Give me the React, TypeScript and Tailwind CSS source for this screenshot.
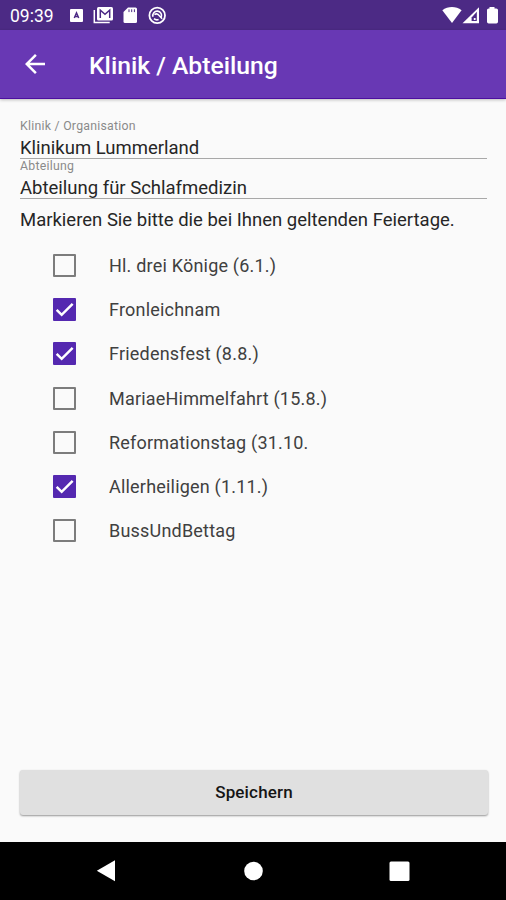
import clsx from "clsx";
import React, { useState } from "react";

const holidays = [
  { name: "Hl. drei Könige (6.1.)", checked: false },
  { name: "Fronleichnam", checked: true },
  { name: "Friedensfest (8.8.)", checked: true },
  { name: "MariaeHimmelfahrt (15.8.)", checked: false },
  { name: "Reformationstag (31.10.", checked: false },
  { name: "Allerheiligen (1.11.)", checked: true },
  { name: "BussUndBettag", checked: false },
];

const StatusBar = () => (
  <div className="flex h-[30px] shrink-0 items-center bg-[#4c2a85] text-white">
    <span className="ml-[10px] w-[60px] pt-px text-[17.5px] leading-[30px]">
      09:39
    </span>
    <svg className="h-[30px] w-[100px]" viewBox="70 0 100 30" fill="#fff">
      <rect x="70" y="9" width="13" height="13" rx="1" />
      <path
        d="M74.3 18 76.5 12.8l2.2 5.2M75 16.4h3"
        fill="none"
        stroke="#4c2a85"
        strokeWidth="1.5"
      />
      <path
        d="M94.3 10v12.6h15.4"
        fill="none"
        stroke="#fff"
        strokeWidth="1.5"
      />
      <rect x="97" y="7" width="16" height="13.5" rx="1.5" />
      <path
        d="M100.3 18V10.2l4.7 4 4.7-4V18"
        fill="none"
        stroke="#4c2a85"
        strokeWidth="1.5"
      />
      <path d="M128 7.5h7.5a1.5 1.5 0 0 1 1.5 1.5v12.5a1.5 1.5 0 0 1-1.5 1.5H125a1.5 1.5 0 0 1-1.5-1.5V12z" />
      <path
        d="M129 9.3v2.8M131.7 9.3v2.8M134.4 9.3v2.8"
        stroke="#4c2a85"
        strokeWidth="1"
      />
      <g fill="none" stroke="#fff">
        <circle cx="157.2" cy="15.4" r="7.8" strokeWidth="1.8" />
        <path
          d="M153 16.8a4.4 4.4 0 1 1 8.2.6M154 18.6a4.4 4.4 0 0 0 4.6.9M154.5 14.6c1.6-1.2 3.2-.8 4.2.4l3.4 3.8"
          strokeWidth="1.6"
        />
      </g>
    </svg>
    <svg
      className="ml-auto mr-[6px] h-[30px] w-[60px]"
      viewBox="440 0 60 30"
      fill="#fff"
    >
      <path d="M442.3 10.3c5.7-4.4 13.6-4.4 19.3 0L452 23z" />
      <path d="M479 7.3V23.3h-16.5z" />
      <path d="M471.6 17.6l5.2-5.8v9.2h-5.2z" fill="#4c2a85" />
      <path d="M473.8 18h1.8v2h-1.8z" />
      <path d="M489.5 7h5v1.4h1.8q1.7 0 1.7 1.6v11.8q0 1.6-1.7 1.6h-7.6q-1.7 0-1.7-1.6V10q0-1.6 1.7-1.6h.8z" />
    </svg>
  </div>
);

const Toolbar = () => (
  <header className="z-10 flex h-[69px] shrink-0 items-center border-b border-[#4d0fa0] bg-[#6838b4] text-white shadow-[0_1px_3px_rgba(0,0,0,0.25)]">
    <button aria-label="Zurück" className="ml-[20px] w-[69px]">
      <svg className="h-[30px] w-[30px]" viewBox="0 0 24 24" fill="#fff">
        <path d="M20 11H7.83l5.59-5.59L12 4l-8 8 8 8 1.41-1.41L7.83 13H20z" />
      </svg>
    </button>
    <h1 className="whitespace-nowrap pt-[3px] text-[24.7px] font-medium leading-[30px]">
      Klinik / Abteilung
    </h1>
  </header>
);

const Field: React.FC<{ label: string; value: string }> = ({
  label,
  value,
}) => (
  <div className="flex h-10 flex-col border-b border-[#a8a8a8]">
    <label className="h-4 shrink-0 text-[12.3px] leading-[14px] tracking-[0.25px] text-[#8a8a8a]">
      {label}
    </label>
    <span className="text-[18.5px] leading-[27px] text-[#262626]">
      {value}
    </span>
  </div>
);

const Checkbox: React.FC<{
  name: string;
  checked: boolean;
  onChange: () => void;
}> = ({ name, checked, onChange }) => (
  <label className="flex h-[44.3px] items-center">
    <input
      type="checkbox"
      className="sr-only"
      checked={checked}
      onChange={onChange}
    />
    <span
      className={clsx(
        "ml-[33px] mr-[33px] flex h-[23px] w-[23px] items-center justify-center rounded-[1px]",
        checked ? "bg-[#5428b0]" : "border-2 border-[#7c7c7c]"
      )}
    >
      {checked && (
        <svg className="h-[23px] w-[23px]" viewBox="0 0 22 22" fill="none">
          <path d="M3.5 11.3l4.8 4.8L18.8 5.6" stroke="#fff" strokeWidth="2.4" />
        </svg>
      )}
    </span>
    <span className="text-[18px] tracking-[0.2px] text-[#404040]">{name}</span>
  </label>
);

const NavigationBar = () => (
  <nav className="flex h-[58px] shrink-0 bg-black">
    <svg className="h-[58px] w-full" viewBox="0 842 506 58" fill="#fff">
      <path d="M96.8 870.8 115 860.3v21z" />
      <circle cx="253.5" cy="871" r="9.3" />
      <rect x="389.5" y="861.5" width="20" height="19.5" rx="1.5" />
    </svg>
  </nav>
);

const App = () => {
  const [items, setItems] = useState(holidays);

  const toggle = (idx: number) =>
    setItems(
      items.map((item, i) =>
        i === idx ? { ...item, checked: !item.checked } : item
      )
    );

  return (
    <div className="flex h-[900px] w-[506px] flex-col bg-[#fafafa] font-['Roboto',sans-serif]">
      <StatusBar />
      <Toolbar />
      <main className="flex grow flex-col px-5 pt-5">
        <div className="mr-[-1px]">
          <Field label="Klinik / Organisation" value="Klinikum Lummerland" />
          <Field label="Abteilung" value="Abteilung für Schlafmedizin" />
        </div>
        <p className="mt-[9px] whitespace-nowrap text-[18.5px] leading-6 text-[#262626]">
          Markieren Sie bitte die bei Ihnen geltenden Feiertage.
        </p>
        <div className="mt-[11px]">
          {items.map((item, idx) => (
            <Checkbox
              key={item.name}
              name={item.name}
              checked={item.checked}
              onChange={() => toggle(idx)}
            />
          ))}
        </div>
        <button className="mb-[27px] mr-[-2px] mt-auto h-[45px] rounded-[3px] bg-[#e0e0e0] pt-px text-[17px] font-medium tracking-[0.15px] text-[#151515] shadow-[0_1px_2px_rgba(0,0,0,0.4)]">
          Speichern
        </button>
      </main>
      <NavigationBar />
    </div>
  );
};

export default App;
